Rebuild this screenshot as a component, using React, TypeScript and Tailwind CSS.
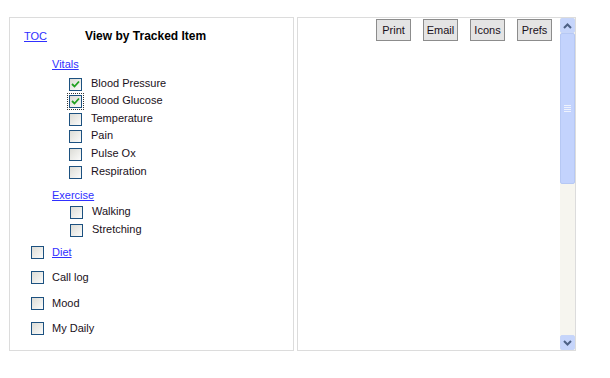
import React from "react";

const font = { fontFamily: '"Liberation Sans", Arial, sans-serif' };

function Box({ checked = false, focus = false }: { checked?: boolean; focus?: boolean }) {
  return (
    <span
      className={
        "relative inline-flex shrink-0 items-center justify-center " +
        (focus ? "outline outline-1 outline-dotted outline-[#333] outline-offset-[1px]" : "")
      }
    >
      <span className="flex h-[13px] w-[13px] items-center justify-center border border-[#1c5180] bg-gradient-to-br from-[#dcdcd6] to-[#fbfbfa]">
        {checked && (
          <svg width="9" height="9" viewBox="0 0 9 9">
            <path d="M1 4 L3.5 6.5 L8 1.5" fill="none" stroke="#21a121" strokeWidth="1.8" />
          </svg>
        )}
      </span>
    </span>
  );
}

function SubRow({ label, checked, focus, h }: { label: string; checked?: boolean; focus?: boolean; h: string }) {
  return (
    <div className={"flex items-start pl-[59px] " + h}>
      <span className="mt-[4px] flex">
        <Box checked={checked} focus={focus} />
      </span>
      <span className="ml-[9px] mt-[2px] text-[11px] leading-[14px] text-[#1a1020]">{label}</span>
    </div>
  );
}

function TopRow({ label, link, h }: { label: string; link?: boolean; h: string }) {
  return (
    <div className={"flex items-start pl-[21px] " + h}>
      <span className="mt-[6px] flex">
        <Box />
      </span>
      <span
        className={
          "ml-[8px] mt-[5px] text-[11px] leading-[14px] " +
          (link ? "text-[#3030ff] underline" : "text-[#1a1020]")
        }
      >
        {label}
      </span>
    </div>
  );
}

function Chevron({ up }: { up?: boolean }) {
  return (
    <svg width="9" height="6" viewBox="0 0 9 6">
      <path
        d={up ? "M1 5 L4.5 1.5 L8 5" : "M1 1 L4.5 4.5 L8 1"}
        fill="none"
        stroke="#4d6185"
        strokeWidth="2"
      />
    </svg>
  );
}

export default function App() {
  return (
    <div className="h-[378px] w-[610px] bg-white" style={font}>
      <div className="flex gap-[3px] pl-[9px] pt-[17px]">
        {/* Left panel */}
        <div className="h-[334px] w-[285px] border border-[#dcdcdc] pl-[14px] pt-[11px]">
          <div className="flex h-[14px] items-center">
            <a className="w-[61px] text-[11px] leading-[14px] text-[#3030ff] underline">TOC</a>
            <span className="text-[12px] font-bold leading-[14px] text-black">View by Tracked Item</span>
          </div>
          <div className="ml-[28px] mt-[14px] flex h-[14px] items-center">
            <a className="text-[11px] leading-[14px] text-[#3030ff] underline">Vitals</a>
          </div>
          <div className="mt-[3px] -ml-[14px]">
            <SubRow label="Blood Pressure" checked h="h-[17px]" />
            <SubRow label="Blood Glucose" checked focus h="h-[18px]" />
            <SubRow label="Temperature" h="h-[17px]" />
            <SubRow label="Pain" h="h-[18px]" />
            <SubRow label="Pulse Ox" h="h-[18px]" />
            <SubRow label="Respiration" h="h-[18px]" />
          </div>
          <div className="ml-[28px] mt-[8px] flex h-[14px] items-center">
            <a className="text-[11px] leading-[14px] text-[#3030ff] underline">Exercise</a>
          </div>
          <div className="-ml-[14px]">
            <div className="pl-[1px]">
              <SubRow label="Walking" h="h-[18px]" />
              <SubRow label="Stretching" h="h-[18px]" />
            </div>
          </div>
          <div className="-ml-[14px] mt-[2px]">
            <TopRow label="Diet" link h="h-[25px]" />
            <TopRow label="Call log" h="h-[26px]" />
            <TopRow label="Mood" h="h-[25px]" />
            <TopRow label="My Daily" h="h-[25px]" />
          </div>
        </div>

        {/* Right panel */}
        <div className="flex h-[334px] w-[279px] border border-[#dcdcdc]">
          <div className="flex flex-1 justify-end gap-[12px] pr-[8px] pt-[1px]">
            {["Print", "Email", "Icons", "Prefs"].map((b) => (
              <button
                key={b}
                className="h-[22px] w-[35px] border border-[#8c8c8c] bg-[#e4e4e4] text-[11px] leading-[14px] text-[#1a1020]"
                style={font}
              >
                {b}
              </button>
            ))}
          </div>
          <div className="flex w-[15px] flex-col bg-[#f6f5ef]">
            <div className="flex h-[15px] items-center justify-center rounded-[2px] border border-[#c8d6f8] bg-[#c6d5fb]">
              <Chevron up />
            </div>
            <div className="flex h-[151px] flex-col items-center justify-center rounded-[2px] border border-[#b6c8f4] bg-[#c3d3fd]">
              <div className="flex flex-col gap-[1px]">
                <div className="h-[1px] w-[7px] bg-[#eef2fd]" />
                <div className="h-[1px] w-[7px] bg-[#eef2fd]" />
                <div className="h-[1px] w-[7px] bg-[#eef2fd]" />
                <div className="h-[1px] w-[7px] bg-[#eef2fd]" />
              </div>
            </div>
            <div className="flex-1" />
            <div className="flex h-[15px] items-center justify-center rounded-[2px] border border-[#c8d6f8] bg-[#c6d5fb]">
              <Chevron />
            </div>
          </div>
        </div>
      </div>
    </div>
  );
}
